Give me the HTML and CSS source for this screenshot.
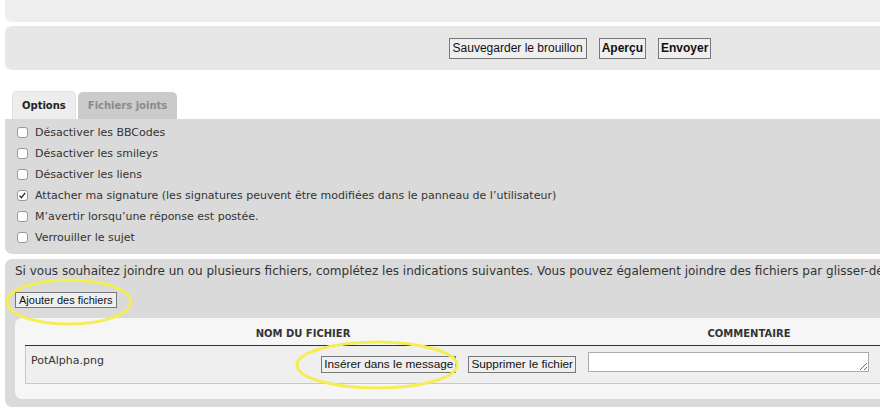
FILE: index.html
```html
<!DOCTYPE html>
<html lang="fr">
<head>
<meta charset="utf-8">
<title>Options</title>
<link rel="stylesheet" href="styles.css">
</head>
<body>
<div class="page">
  <div class="panel top-panel"></div>
  <div class="panel bar">
    <div class="actions">
      <button class="btn">Sauvegarder le brouillon</button>
      <button class="btn strong">Aperçu</button>
      <button class="btn strong">Envoyer</button>
    </div>
  </div>

  <div class="tabs">
    <span class="tab active">Options</span>
    <span class="tab">Fichiers joints</span>
  </div>

  <div class="panel options">
    <div class="opt"><span class="cb"></span>Désactiver les BBCodes</div>
    <div class="opt"><span class="cb"></span>Désactiver les smileys</div>
    <div class="opt"><span class="cb"></span>Désactiver les liens</div>
    <div class="opt"><span class="cb checked"><svg viewBox="0 0 11 11" width="11" height="11"><path d="M2.6 5.6 L4.4 7.8 L8.2 2.8" fill="none" stroke="#222" stroke-width="1.3"/></svg></span>Attacher ma signature (les signatures peuvent être modifiées dans le panneau de l’utilisateur)</div>
    <div class="opt"><span class="cb"></span>M’avertir lorsqu’une réponse est postée.</div>
    <div class="opt"><span class="cb"></span>Verrouiller le sujet</div>
  </div>

  <div class="panel attach">
    <p class="intro">Si vous souhaitez joindre un ou plusieurs fichiers, complétez les indications suivantes. Vous pouvez également joindre des fichiers par glisser-déposer dans la zone de message.</p>
    <div class="add-row"><button class="btn small">Ajouter des fichiers</button></div>
    <div class="inner">
      <div class="thead">
        <div class="col-name">NOM DU FICHIER</div>
        <div class="col-comment">COMMENTAIRE</div>
      </div>
      <div class="trow">
        <div class="col-name cell-name">
          <span class="fname">PotAlpha.png</span>
          <span class="file-actions">
            <button class="btn row-btn">Insérer dans le message</button>
            <button class="btn row-btn">Supprimer le fichier</button>
          </span>
        </div>
        <div class="col-comment cell-comment"><textarea class="comment"></textarea></div>
      </div>
    </div>
  </div>

  <svg class="marks" width="880" height="418" viewBox="0 0 880 418">
    <ellipse cx="69" cy="302" rx="62" ry="22" fill="none" stroke="#f4ee55" stroke-width="3"/>
    <ellipse cx="377" cy="365" rx="80" ry="23" fill="none" stroke="#f4ee55" stroke-width="3"/>
  </svg>
</div>
</body>
</html>
```
FILE: styles.css
```css
html, body {
  margin: 0;
  padding: 0;
  overflow: hidden;
  background: #fff;
}
body {
  font-family: "DejaVu Sans", Verdana, sans-serif;
  font-size: 11px;
  color: #333;
}
.page {
  position: relative;
  width: 1150px;
  padding-left: 5px;
}
.panel {
  border-radius: 7px;
}
.top-panel {
  height: 22px;
  background: #eeeeee;
  border-radius: 0 0 7px 7px;
}
.bar {
  margin-top: 4px;
  height: 44px;
  background: #e7e7e7;
  box-sizing: border-box;
  padding-top: 12px;
}
.actions {
  display: flex;
  justify-content: center;
  gap: 12px;
}
.btn {
  font-family: "Liberation Sans", Arial, sans-serif;
  font-size: 12px;
  color: #111;
  background: #efefef;
  border: 1px solid #777;
  border-radius: 0;
  margin: 0;
  padding: 0 3px;
  height: 21px;
  line-height: 19px;
}
.btn.strong {
  font-weight: bold;
  padding: 0 2px;
}
.btn.small {
  font-size: 11px;
  height: 16px;
  line-height: 14px;
  padding: 0 3px;
}
.btn.row-btn {
  font-size: 11.8px;
  height: 17px;
  line-height: 15px;
  padding: 0 2px;
}
.tabs {
  display: flex;
  align-items: flex-end;
  gap: 2px;
  margin-top: 21px;
  padding-left: 7px;
  height: 28px;
}
.tab {
  display: flex;
  align-items: center;
  justify-content: center;
  height: 27px;
  padding: 0 10px;
  font-weight: bold;
  font-size: 10px;
  color: #8a8a8a;
  background: #cbcbcb;
  border-radius: 5px 5px 0 0;
}
.tab.active {
  height: 28px;
  padding: 0 9px;
  color: #222;
  background: #ededed;
  box-sizing: border-box;
  border: 1px solid #e0e0e0;
  border-bottom: 0;
}
.options {
  background: #dadada;
  padding: 3px 0 6px 12px;
  border-radius: 0 7px 7px 7px;
}
.opt {
  display: flex;
  align-items: center;
  height: 21px;
  white-space: nowrap;
}
.cb {
  width: 11px;
  height: 11px;
  box-sizing: border-box;
  border: 1px solid #9a9a9a;
  border-radius: 3px;
  background: #fff;
  margin-right: 7px;
  display: flex;
}
.cb svg {
  margin: -1px;
}
.attach {
  margin-top: 5px;
  background: #dadada;
  padding: 5px 10px 8px 10px;
}
.intro {
  margin: 0;
  font-size: 12px;
  line-height: 15px;
  white-space: nowrap;
}
.add-row {
  margin-top: 13px;
  height: 16px;
}
.inner {
  margin-top: 10px;
  background: #f6f6f6;
  border-radius: 7px;
  padding: 0 0 15px 10px;
}
.thead {
  display: flex;
  height: 28px;
  box-sizing: border-box;
  padding-top: 10px;
  border-bottom: 1px solid #333;
  font-weight: bold;
  font-size: 10px;
  line-height: 12px;
  color: #333;
}
.col-name {
  width: 556px;
  box-sizing: border-box;
  text-align: center;
}
.col-comment {
  width: 336px;
  box-sizing: border-box;
  text-align: center;
}
.trow {
  display: flex;
  height: 38px;
  box-sizing: border-box;
  background: #efefef;
  border-left: 1px solid #c8c8c8;
  border-bottom: 1px solid #c8c8c8;
}
.cell-name {
  display: flex;
  justify-content: space-between;
  align-items: flex-start;
  padding: 8px 6px 0 5px;
  text-align: left;
}
.fname {
  line-height: 14px;
}
.file-actions {
  display: flex;
  gap: 12px;
  margin-top: 2px;
}
.cell-comment {
  padding: 6px 6px 0 6px;
  text-align: left;
}
.comment {
  display: block;
  width: 281px;
  height: 20px;
  box-sizing: border-box;
  margin: 0;
  border: 1px solid #aaa;
  background: #fff;
  font-family: "DejaVu Sans", Verdana, sans-serif;
  font-size: 11px;
}
.marks {
  position: absolute;
  left: 0;
  top: 0;
  pointer-events: none;
}
```
